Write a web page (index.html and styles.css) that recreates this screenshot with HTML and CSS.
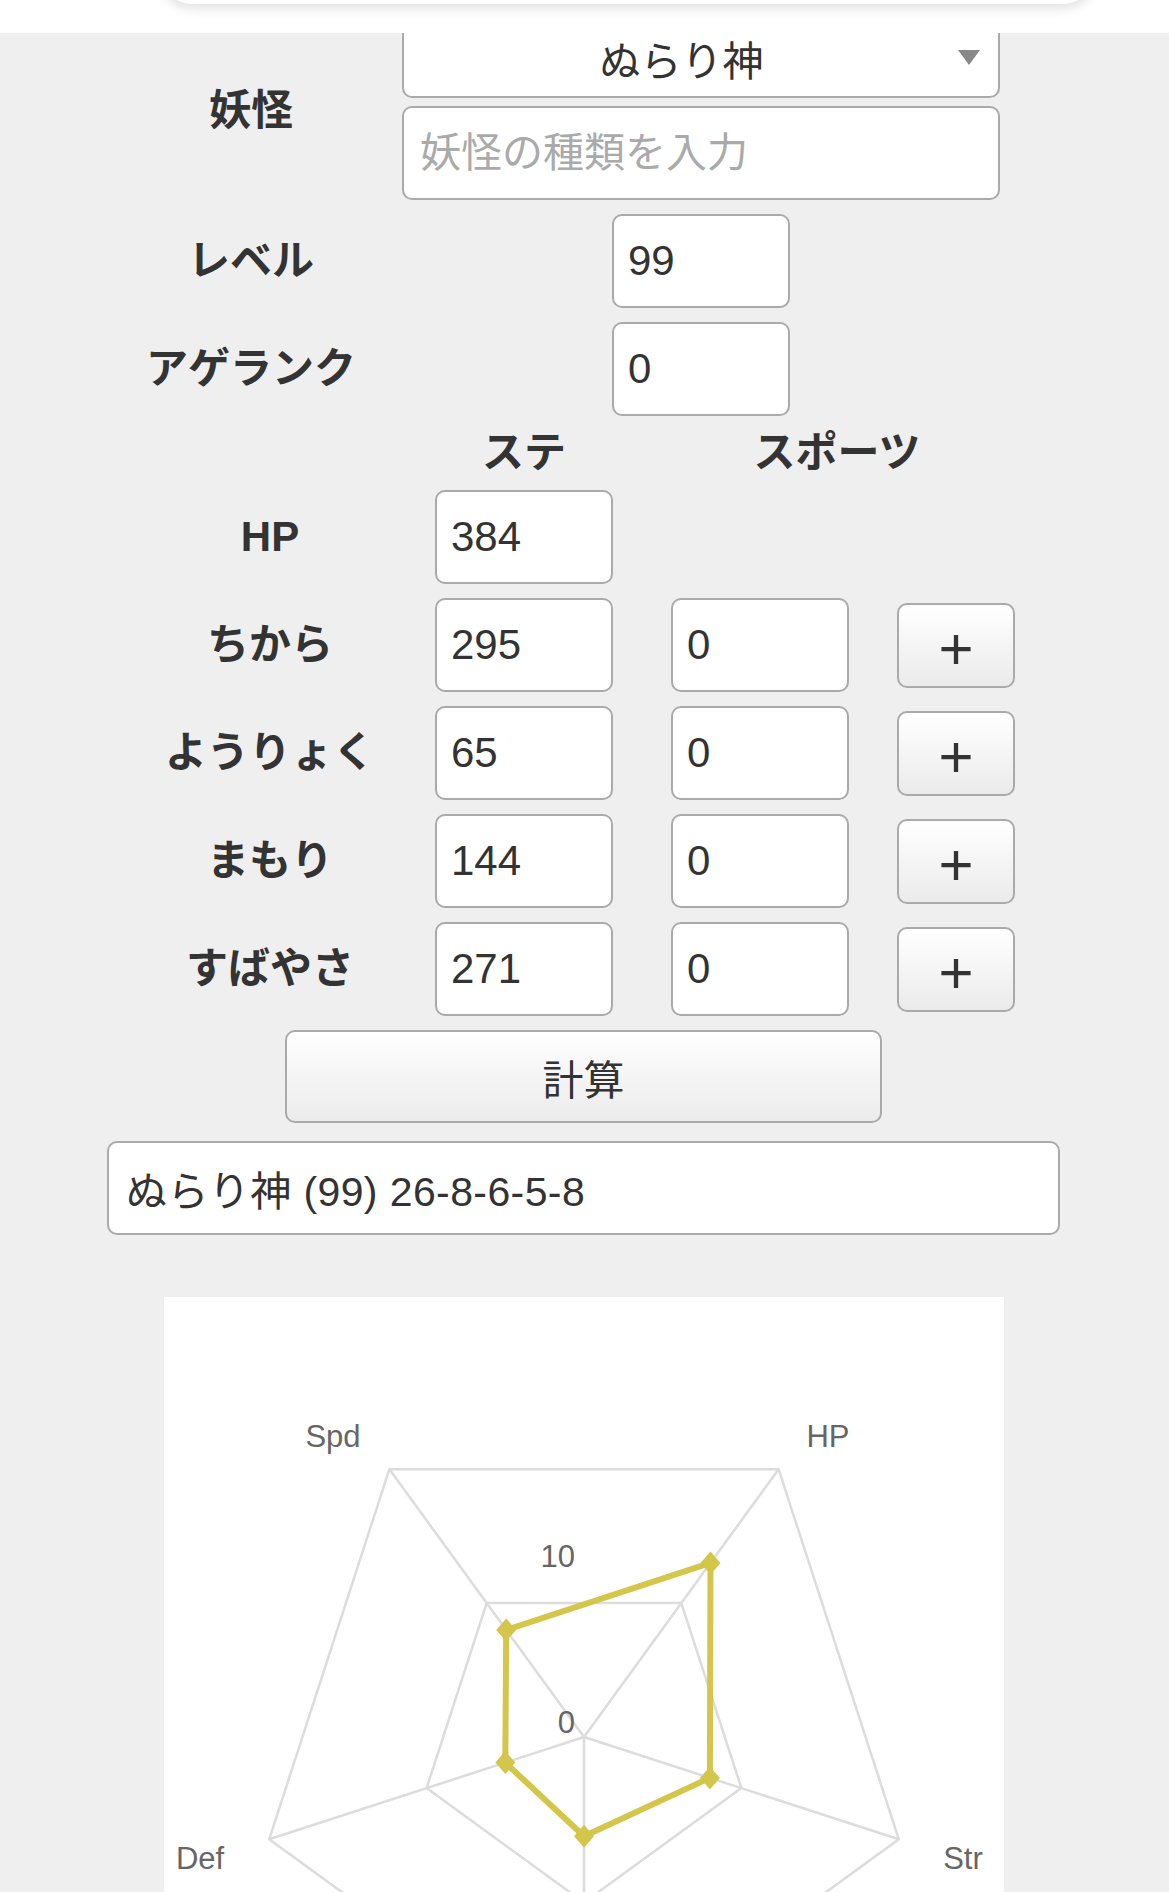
FILE: index.html
```html
<!DOCTYPE html>
<html lang="ja">
<head>
<meta charset="utf-8">
<title>妖怪ステータス計算</title>
<link rel="stylesheet" href="styles.css">
</head>
<body>
<header class="topbar"><div class="topbar-card"></div></header>
<main class="page">
  <section class="basic">
    <div class="label">妖怪</div>
    <div class="yokai-cell">
      <div class="select-wrap">
        <select class="select"><option>ぬらり神</option></select>
        <span class="select-arrow"></span>
      </div>
      <input class="field field-wide" type="text" placeholder="妖怪の種類を入力">
    </div>
    <div class="label">レベル</div>
    <div class="center-cell"><input class="field field-num" type="text" value="99"></div>
    <div class="label">アゲランク</div>
    <div class="center-cell"><input class="field field-num" type="text" value="0"></div>
  </section>

  <section class="stats">
    <div class="col-head c2">ステ</div>
    <div class="col-head c34">スポーツ</div>

    <div class="label stat-label c1">HP</div>
    <input class="field field-num c2" type="text" value="384">

    <div class="label stat-label c1">ちから</div>
    <input class="field field-num c2" type="text" value="295">
    <input class="field field-num c3" type="text" value="0">
    <button class="plus c4" type="button">+</button>

    <div class="label stat-label c1">ようりょく</div>
    <input class="field field-num c2" type="text" value="65">
    <input class="field field-num c3" type="text" value="0">
    <button class="plus c4" type="button">+</button>

    <div class="label stat-label c1">まもり</div>
    <input class="field field-num c2" type="text" value="144">
    <input class="field field-num c3" type="text" value="0">
    <button class="plus c4" type="button">+</button>

    <div class="label stat-label c1">すばやさ</div>
    <input class="field field-num c2" type="text" value="271">
    <input class="field field-num c3" type="text" value="0">
    <button class="plus c4" type="button">+</button>
  </section>

  <button class="calc" type="button">計算</button>
  <input class="field result" type="text" value="ぬらり神 (99) 26-8-6-5-8">

  <div class="chart-panel">
    <svg class="radar" width="840" height="620" viewBox="0 0 840 620">
      <g class="grid">
        <polygon points="614.6,172.2 734.8,542.3 420,771 105.2,542.3 225.4,172.2"/>
        <polygon points="517.3,306.1 577.4,491.1 420,605.5 262.6,491.1 322.7,306.1"/>
        <line x1="420" y1="440" x2="614.6" y2="172.2"/>
        <line x1="420" y1="440" x2="734.8" y2="542.3"/>
        <line x1="420" y1="440" x2="420" y2="771"/>
        <line x1="420" y1="440" x2="105.2" y2="542.3"/>
        <line x1="420" y1="440" x2="225.4" y2="172.2"/>
      </g>
      <text class="tick" x="411" y="259">10</text>
      <text class="tick" x="411" y="425">0</text>
      <polygon class="data-line" points="546.5,265.9 545.9,480.9 420,539.3 341.3,465.6 342.2,332.9"/>
      <g class="data-point">
        <polygon points="546.5,254.4 556.5,265.9 546.5,277.4 536.5,265.9"/>
        <polygon points="545.9,469.4 555.9,480.9 545.9,492.4 535.9,480.9"/>
        <polygon points="420,527.8 430,539.3 420,550.8 410,539.3"/>
        <polygon points="341.3,454.1 351.3,465.6 341.3,477.1 331.3,465.6"/>
        <polygon points="342.2,321.4 352.2,332.9 342.2,344.4 332.2,332.9"/>
      </g>
      <text class="axis-label" x="169" y="139">Spd</text>
      <text class="axis-label" x="664" y="139">HP</text>
      <text class="axis-label" x="36" y="561">Def</text>
      <text class="axis-label" x="799" y="561">Str</text>
    </svg>
  </div>
</main>
</body>
</html>
```

FILE: styles.css
```css
body {
  margin: 0;
  background: #efefef;
  font-family: "Liberation Sans", "Noto Sans CJK JP", sans-serif;
  color: #333;
}

.topbar {
  position: fixed;
  top: 0;
  left: 0;
  right: 0;
  height: 33px;
  background: #fff;
  z-index: 10;
}

.topbar-card {
  position: absolute;
  left: 160px;
  width: 935px;
  top: -60px;
  height: 64px;
  border-radius: 38px;
  background: #fff;
  box-shadow: 0 4px 12px rgba(0, 0, 0, 0.13);
}

.page {
  padding-top: 22px;
}

.basic {
  display: grid;
  grid-template-columns: 302px 598px;
  row-gap: 14px;
  margin-left: 100px;
  width: 900px;
}

.label {
  display: flex;
  align-items: center;
  justify-content: center;
  font-size: 42px;
  font-weight: 700;
  line-height: 1;
  white-space: nowrap;
  color: #333;
}

.yokai-cell {
  display: flex;
  flex-direction: column;
  gap: 8px;
}

.select-wrap {
  position: relative;
  height: 76px;
}

.select {
  box-sizing: border-box;
  width: 598px;
  height: 76px;
  margin: 0;
  border: 2px solid #aaa;
  border-radius: 10px;
  background: #fff;
  -webkit-appearance: none;
  appearance: none;
  font-family: "Noto Sans CJK JP", sans-serif;
  font-size: 41px;
  color: #333;
  padding: 0 45px 4px 6px;
  text-align: center;
  text-align-last: center;
  outline: none;
}

.select-arrow {
  position: absolute;
  right: 20px;
  top: 28px;
  width: 0;
  height: 0;
  border-left: 11px solid transparent;
  border-right: 11px solid transparent;
  border-top: 15px solid #888;
  pointer-events: none;
}

.field {
  box-sizing: border-box;
  height: 94px;
  margin: 0;
  border: 2px solid #aaa;
  border-radius: 10px;
  background: #fff;
  font-family: "Liberation Sans", "Noto Sans CJK JP", sans-serif;
  font-size: 42px;
  color: #333;
  padding: 0 14px;
  outline: none;
}

.field-wide {
  width: 598px;
  font-size: 41px;
  padding-left: 16px;
}

.field-wide::placeholder {
  color: #aaa;
  font-family: "Noto Sans CJK JP", sans-serif;
}

.center-cell {
  display: flex;
  justify-content: center;
}

.field-num {
  width: 178px;
}

.stats {
  display: grid;
  grid-template-columns: 305px 236px 226px 118px;
  grid-template-rows: 46px;
  grid-auto-rows: 94px;
  row-gap: 14px;
  margin: 14px 0 0 130px;
}

.c1 { grid-column: 1; }
.c2 { grid-column: 2; }
.c3 { grid-column: 3; }
.c4 { grid-column: 4; }
.c34 { grid-column: 3 / 5; }

.stat-label {
  padding-right: 25px;
}

.col-head {
  display: flex;
  align-items: center;
  justify-content: center;
  font-size: 42px;
  font-weight: 700;
  line-height: 1;
  color: #333;
}

.col-head.c2 {
  width: 178px;
}

.col-head.c34 {
  padding-right: 12px;
}

.plus {
  align-self: center;
  box-sizing: border-box;
  width: 118px;
  height: 85px;
  margin: 0;
  border: 2px solid #aaa;
  border-radius: 10px;
  background: linear-gradient(#ffffff, #ebebeb);
  font-family: "Liberation Sans", sans-serif;
  font-size: 60px;
  line-height: 1;
  color: #333;
  padding: 8px 0 0 0;
}

.calc {
  display: block;
  box-sizing: border-box;
  margin: 14px 0 0 285px;
  width: 597px;
  height: 93px;
  border: 2px solid #aaa;
  border-radius: 10px;
  background: linear-gradient(#ffffff, #ebebeb);
  font-family: "Noto Sans CJK JP", sans-serif;
  font-size: 41px;
  color: #333;
  padding: 0;
}

.result {
  display: block;
  margin: 18px 0 0 107px;
  width: 953px;
  font-size: 41px;
  letter-spacing: 0.4px;
  padding: 0 17px;
}

.chart-panel {
  margin: 62px 0 0 164px;
  width: 840px;
  height: 620px;
  background: #fff;
}

.radar {
  display: block;
}

.grid polygon,
.grid line {
  fill: none;
  stroke: #dcdcdc;
  stroke-width: 2.5;
}

.data-line {
  fill: none;
  stroke: #d4c54b;
  stroke-width: 6;
  stroke-linejoin: round;
}

.data-point polygon {
  fill: #d4c54b;
}

.axis-label {
  font-family: "Liberation Sans", sans-serif;
  font-size: 31px;
  fill: #666;
  text-anchor: middle;
  dominant-baseline: central;
}

.tick {
  font-family: "Liberation Sans", sans-serif;
  font-size: 31px;
  fill: #666;
  text-anchor: end;
  dominant-baseline: central;
}
```
